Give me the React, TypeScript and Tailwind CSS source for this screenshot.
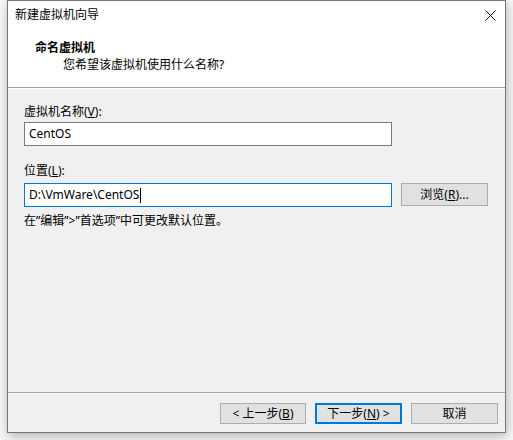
import React from "react";

const font = { fontFamily: '"Noto Sans", "Noto Sans CJK SC", sans-serif' };

function Btn({ children, primary, className = "" }: { children: React.ReactNode; primary?: boolean; className?: string }) {
  return (
    <div
      className={
        "flex items-center justify-center bg-[#e1e1e1] text-[12px] leading-[16px] text-black " +
        (primary ? "border-2 border-[#0078d7] " : "border border-[#adadad] ") +
        className
      }
    >
      {children}
    </div>
  );
}

export default function App() {
  return (
    <div className="w-[513px] h-[440px] bg-[#f7f7f7] overflow-hidden text-black" style={font}>
      <div className="ml-[7px] w-[499px] h-[433px] border border-[#777777] bg-[#f0f0f0] flex flex-col shadow-[1px_3px_10px_rgba(0,0,0,0.28)]">
        {/* title bar */}
        <div className="h-[29px] bg-white flex items-center justify-between pl-[7px] pr-[9px]">
          <span className="text-[12px] leading-[16px] mt-[-1px]">新建虚拟机向导</span>
          <svg width="11" height="11" viewBox="0 0 11 11" className="mt-[-1px]">
            <path d="M0.5 0.5 L10.5 10.5 M10.5 0.5 L0.5 10.5" stroke="#111" strokeWidth="1" />
          </svg>
        </div>
        {/* header */}
        <div className="h-[57px] bg-white pt-[10px]">
          <div className="pl-[27px] text-[12px] leading-[16px] font-bold">命名虚拟机</div>
          <div className="pl-[55px] mt-[1px] text-[12px] leading-[16px]">您希望该虚拟机使用什么名称?</div>
        </div>
        <div className="h-[2px] border-t border-[#a0a0a0] border-b border-b-white" />
        {/* body */}
        <div className="flex-1 pl-[16px] pt-[15px]">
          <div className="text-[12px] leading-[16px]">
            虚拟机名称(<span className="underline">V</span>):
          </div>
          <div className="mt-[2px] w-[368px] h-[24px] bg-white border border-[#7a7a7a] flex items-center pl-[4px] text-[12px] leading-[16px]">
            CentOS
          </div>
          <div className="mt-[17px] text-[12px] leading-[16px]">
            位置(<span className="underline">L</span>):
          </div>
          <div className="mt-[4px] flex items-start gap-[9px]">
            <div className="w-[368px] h-[24px] bg-white border border-[#0078d7] flex items-center pl-[4px] text-[12px] leading-[16px]">
              D:\VmWare\CentOS
              <span className="inline-block w-px h-[15px] bg-black ml-[1px]" />
            </div>
            <Btn className="w-[87px] h-[23px]">
              浏览(<span className="underline">R</span>)...
            </Btn>
          </div>
          <div className="mt-[6px] text-[12px] leading-[16px]">在”编辑”&gt;”首选项”中可更改默认位置。</div>
        </div>
        <div className="h-[2px] border-t border-[#a0a0a0] border-b border-b-white" />
        {/* footer */}
        <div className="h-[38px] flex justify-end items-start gap-[9px] pt-[9px] pr-[7px]">
          <Btn className="w-[86px] h-[21px]">
            &lt; 上一步(<span className="underline">B</span>)
          </Btn>
          <Btn primary className="w-[87px] h-[21px]">
            下一步(<span className="underline">N</span>) &gt;
          </Btn>
          <Btn className="w-[87px] h-[21px]">取消</Btn>
        </div>
      </div>
    </div>
  );
}
